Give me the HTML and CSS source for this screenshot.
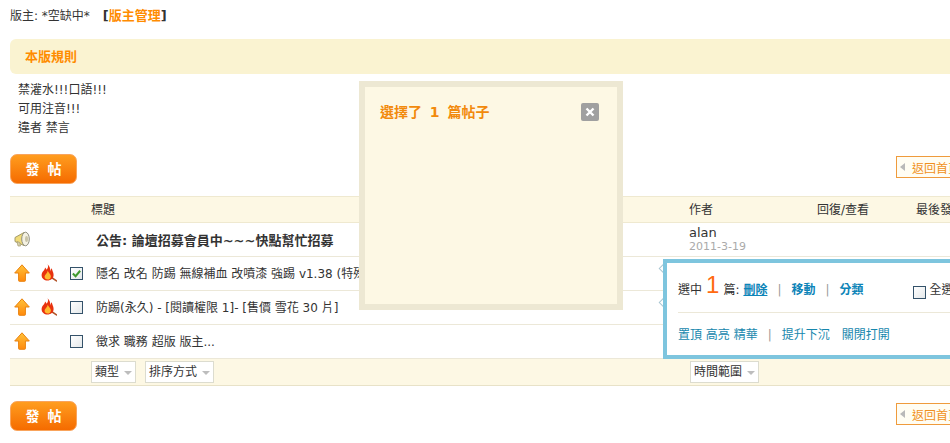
FILE: index.html
```html
<!DOCTYPE html>
<html lang="zh-Hant">
<head>
<meta charset="utf-8">
<title>版塊</title>
<link rel="stylesheet" href="styles.css">
</head>
<body>
<svg class="defs" width="0" height="0" aria-hidden="true">
  <defs>
    <linearGradient id="arrowFill" x1="0" y1="0" x2="0" y2="1">
      <stop offset="0" stop-color="#ffc23a"/>
      <stop offset="1" stop-color="#ff8a0c"/>
    </linearGradient>
    <symbol id="arrow" viewBox="0 0 16 18">
      <path d="M8 .8 15.300 9H11.400V16.600Q11.400 17.300 10.700 17.300H5.300Q4.600 17.300 4.600 16.600V9H.7Z" fill="url(#arrowFill)" stroke="#e9820f" stroke-width="1"/>
    </symbol>
    <symbol id="fire" viewBox="0 0 16 18">
      <path d="M10.500 13.500 15.500 16.800" stroke="#b3552b" stroke-width="1.600" stroke-linecap="round"/>
      <path d="M6.500 .2C8 3 6.300 4.200 5.800 5.800 5.200 4.800 4.700 4.200 4 3.500 4.200 6.200 .6 7.500 .6 11.200 .6 14.300 3.300 16.500 6.500 16.500 9.800 16.500 12.600 14.300 12.600 11 12.600 8 11 6.500 10.800 4.200 9.800 5.300 9.400 6.500 9.200 7.500 9.500 4.500 8.500 1.800 6.500 .2Z" fill="#e8320e"/>
      <path d="M6.500 6.500C7 9 3.600 10.500 3.600 12.800 3.600 14.600 5 15.600 6.700 15.600 8.400 15.600 9.900 14.400 9.900 12.400 9.900 10.500 7.800 9.200 6.500 6.500Z" fill="#ffb92e"/>
    </symbol>
    <symbol id="horn" viewBox="0 0 17 17">
      <path d="M1 6.500 10 1.500V14.500L1 10.500Z" fill="#f1dc7a" stroke="#a39a6a"/>
      <ellipse cx="11.500" cy="8" rx="3.800" ry="6.800" fill="#f4f1e2" stroke="#8f8f80"/>
      <ellipse cx="12.500" cy="8" rx="1.500" ry="3" fill="#c9c4a8"/>
      <path d="M3 10.500 4 15H6.500L5.800 11.500Z" fill="#d9d3b4" stroke="#a39a6a" stroke-width=".7"/>
    </symbol>
  </defs>
</svg>

<div class="page">
  <p class="mods">版主: *空缺中* <span class="mods-admin">[<a class="orange" href="#">版主管理</a>]</span></p>

  <h2 class="rules-head">本版規則</h2>
  <div class="rules">
    <div>禁灌水!!!口語!!!</div>
    <div>可用注音!!!</div>
    <div>違者 禁言</div>
  </div>

  <div class="bar bar-top">
    <a class="post-btn" href="#">發 帖</a>
    <a class="back" href="#"><span class="back-tri"></span><span class="back-text">返回首頁</span></a>
  </div>

  <div class="list">
    <div class="row head">
      <div class="c-arrow"></div><div class="c-fire"></div><div class="c-check"></div>
      <div class="c-title flush">標題</div>
      <div class="c-author">作者</div>
      <div class="c-reply">回復/查看</div>
      <div class="c-last">最後發表</div>
    </div>
    <div class="row">
      <div class="c-arrow"><svg class="ic-horn"><use href="#horn"/></svg></div><div class="c-fire"></div><div class="c-check"></div>
      <div class="c-title"><strong class="notice">公告: 論壇招募會員中~~~快點幫忙招募</strong></div>
      <div class="c-author"><div class="name">alan</div><div class="date">2011-3-19</div></div>
      <div class="c-reply"></div><div class="c-last"></div>
    </div>
    <div class="row">
      <div class="c-arrow"><svg class="ic"><use href="#arrow"/></svg></div>
      <div class="c-fire"><svg class="ic"><use href="#fire"/></svg></div>
      <div class="c-check"><span class="box checked"><svg viewBox="0 0 12 12"><path d="M2 6 5 9 10 3" fill="none" stroke="#3f9a2e" stroke-width="2.200"/></svg></span></div>
      <div class="c-title">隱名 改名 防踢 無線補血 改噴漆 強踢 v1.38 (特殊)</div>
      <div class="c-author"></div><div class="c-reply"></div><div class="c-last"></div>
      <span class="dot"></span>
    </div>
    <div class="row">
      <div class="c-arrow"><svg class="ic"><use href="#arrow"/></svg></div>
      <div class="c-fire"><svg class="ic"><use href="#fire"/></svg></div>
      <div class="c-check"><span class="box"></span></div>
      <div class="c-title">防踢(永久) - [閱讀權限 1]- [售價 雪花 30 片]</div>
      <div class="c-author"></div><div class="c-reply"></div><div class="c-last"></div>
      <span class="dot"></span>
    </div>
    <div class="row">
      <div class="c-arrow"><svg class="ic"><use href="#arrow"/></svg></div>
      <div class="c-fire"></div>
      <div class="c-check"><span class="box"></span></div>
      <div class="c-title">徵求 職務 超版 版主...</div>
      <div class="c-author"></div><div class="c-reply"></div><div class="c-last"></div>
    </div>
    <div class="row foot">
      <div class="c-arrow"></div><div class="c-fire"></div><div class="c-check"></div>
      <div class="c-title flush filters">
        <span class="drop">類型<i></i></span>
        <span class="drop">排序方式<i></i></span>
      </div>
      <div class="c-author time"><span class="drop">時間範圍<i></i></span></div>
      <div class="c-reply"></div><div class="c-last"></div>
    </div>
  </div>

  <div class="bar bar-bottom">
    <a class="post-btn" href="#">發 帖</a>
    <a class="back" href="#"><span class="back-tri"></span><span class="back-text">返回首頁</span></a>
  </div>
</div>

<div class="dialog">
  <div class="dialog-head">
    <span class="dialog-title">選擇了 1 篇帖子</span>
    <span class="dialog-close"><svg viewBox="0 0 10 10"><path d="M1.500 1.500 8.500 8.500M8.500 1.500 1.500 8.500" stroke="#fff" stroke-width="2.400"/></svg></span>
  </div>
</div>

<div class="mod-panel">
  <div class="mod-top">
    <span>選中</span><span class="count">1</span><span>篇:</span>
    <a class="mod-del" href="#">刪除</a><span class="sep">|</span>
    <a class="mod-strong" href="#">移動</a><span class="sep">|</span>
    <a class="mod-strong" href="#">分類</a>
    <span class="box all"></span><span>全選</span>
  </div>
  <div class="mod-bottom">
    <a href="#">置頂 高亮 精華</a><span class="sep">|</span>
    <a href="#">提升下沉</a>
    <a class="mod-gap" href="#">關閉打開</a>
  </div>
</div>
</body>
</html>
```
FILE: styles.css
```css
* { box-sizing: border-box; }
html, body {
  margin: 0;
  width: 950px;
  height: 443px;
  overflow: hidden;
  background: #fff;
}
body {
  position: relative;
  font: 12px/19px "DejaVu Sans", "Noto Sans CJK TC", sans-serif;
  color: #333;
}
a { text-decoration: none; }
.defs { position: absolute; }
.page { width: 1010px; padding: 6px 0 0 10px; }

.mods { margin: 0; height: 19px; }
.mods-admin { margin-left: 9px; font-size: 13px; font-weight: 700; }
.orange { color: #ff8c00; }

.rules-head {
  margin: 14px 0 0;
  height: 35px;
  padding: 3px 0 0 15px;
  font-size: 13px;
  font-weight: 700;
  line-height: 30px;
  color: #ff8c00;
  background: #faf3d1;
  border-radius: 6px 0 0 6px;
}
.rules { padding: 7px 0 0 8px; height: 80px; }

.bar { display: flex; align-items: flex-start; justify-content: space-between; height: 30px; }
.bar-bottom { margin-top: 15px; }
.post-btn {
  width: 67px;
  height: 30px;
  padding-top: 2px;
  font-size: 14px;
  font-weight: 700;
  line-height: 24px;
  text-align: center;
  word-spacing: 3px;
  color: #fff;
  background: linear-gradient(#ff9d1f, #f56b00);
  border: 1px solid #f9a45c;
  border-radius: 7px;
}
.back {
  display: flex;
  align-items: center;
  width: 114px;
  height: 22px;
  margin-top: 2px;
  padding-left: 3px;
  color: #f09020;
  background: #fffdf3;
  border: 1px solid #ef9b3c;
  white-space: nowrap;
}
.back-text { padding-top: 4px; line-height: 15px; }
.back-tri {
  width: 0;
  height: 0;
  margin-right: 7px;
  border: 4px solid transparent;
  border-left: 0;
  border-right: 5px solid #b9b9b9;
}

.list { margin-top: 12px; }
.row {
  position: relative;
  display: flex;
  align-items: center;
  height: 34px;
  border-bottom: 1px solid #ece8d8;
}
.head {
  height: 27px;
  padding-top: 2px;
  background: #fdf8e4;
  border-top: 1px solid #efe9d0;
  border-bottom: 1px solid #efe9d0;
}
.foot { height: 27px; background: #fdf8e4; border-bottom: 1px solid #e8e2c8; }
.c-arrow { width: 31px; flex: none; display: flex; padding-left: 4px; }
.c-fire { width: 27px; flex: none; display: flex; }
.c-check { width: 23px; flex: none; display: flex; padding-left: 2px; }
.c-title { width: 598px; flex: none; padding: 2px 0 0 5px; white-space: nowrap; overflow: hidden; }
.c-title.flush { padding: 0; }
.c-author { width: 128px; flex: none; }
.c-author.time { padding-left: 1px; }
.c-reply { width: 99px; flex: none; }
.c-last { flex: 1; white-space: nowrap; }
.filters { display: flex; gap: 9px; }
.notice { display: block; margin-top: -1px; font-size: 13px; }
.name { font-size: 13px; line-height: 15px; }
.date { font-size: 11px; line-height: 14px; color: #aaa; }
.ic { width: 16px; height: 18px; margin-top: -2px; }
.ic-horn { width: 17px; height: 17px; }
.box {
  display: block;
  width: 13px;
  height: 13px;
  padding: 0;
  background: linear-gradient(135deg, #fff, #e4e8ea);
  border: 1px solid #34526a;
  flex: none;
}
.box svg { display: block; width: 11px; height: 11px; }
.dot {
  position: absolute;
  left: 650px;
  top: 8px;
  width: 7px;
  height: 7px;
  background: #fff;
  border: 1px solid #a9c6d2;
  transform: rotate(45deg);
}
.drop {
  display: inline-flex;
  align-items: center;
  height: 22px;
  padding: 0 2px 0 3px;
  font-size: 12px;
  background: #fff;
  border: 1px solid #dcdccf;
}
.drop i {
  width: 0;
  height: 0;
  margin: 1px 1px 0 5px;
  border: 4px solid transparent;
  border-top: 4px solid #bdbdbd;
  border-bottom: 0;
}

.dialog {
  position: absolute;
  left: 359px;
  top: 81px;
  width: 264px;
  height: 229px;
  background: #fdf8e4;
  border: 6px solid #ede8d3;
}
.dialog-head {
  display: flex;
  align-items: flex-start;
  justify-content: space-between;
  padding: 16px 18px 0 15px;
}
.dialog-title { font-size: 14px; font-weight: 700; line-height: 19px; color: #f28a0c; word-spacing: 3px; }
.dialog-close {
  width: 18px;
  height: 18px;
  padding: 4px;
  background: #a0a0a0;
  border-radius: 2px;
}
.dialog-close svg { display: block; width: 10px; height: 10px; }

.mod-panel {
  position: absolute;
  left: 663px;
  top: 259px;
  width: 320px;
  height: 100px;
  padding: 0 11px;
  background: #fff;
  border: 4px solid #7ec5de;
}
.mod-top {
  display: flex;
  align-items: center;
  height: 50px;
  padding-top: 6px;
  border-bottom: 1px solid #ece8d8;
  white-space: nowrap;
}
.count {
  margin: -12px 4px 0;
  font-size: 24px;
  font-family: "Liberation Sans", sans-serif;
  line-height: 24px;
  color: #ff6a10;
}
.mod-del { margin-left: 4px; font-weight: 700; color: #0c84b8; text-decoration: underline; }
.mod-strong { font-weight: 700; color: #0c84b8; }
.sep { margin: 0 10px; color: #999; }
.all { margin: 4px 4px 0 49px; }
.mod-bottom { display: flex; align-items: center; height: 40px; padding-top: 4px; white-space: nowrap; }
.mod-bottom a { color: #1687ad; }
.mod-bottom .mod-gap { margin-left: 12px; }
```
